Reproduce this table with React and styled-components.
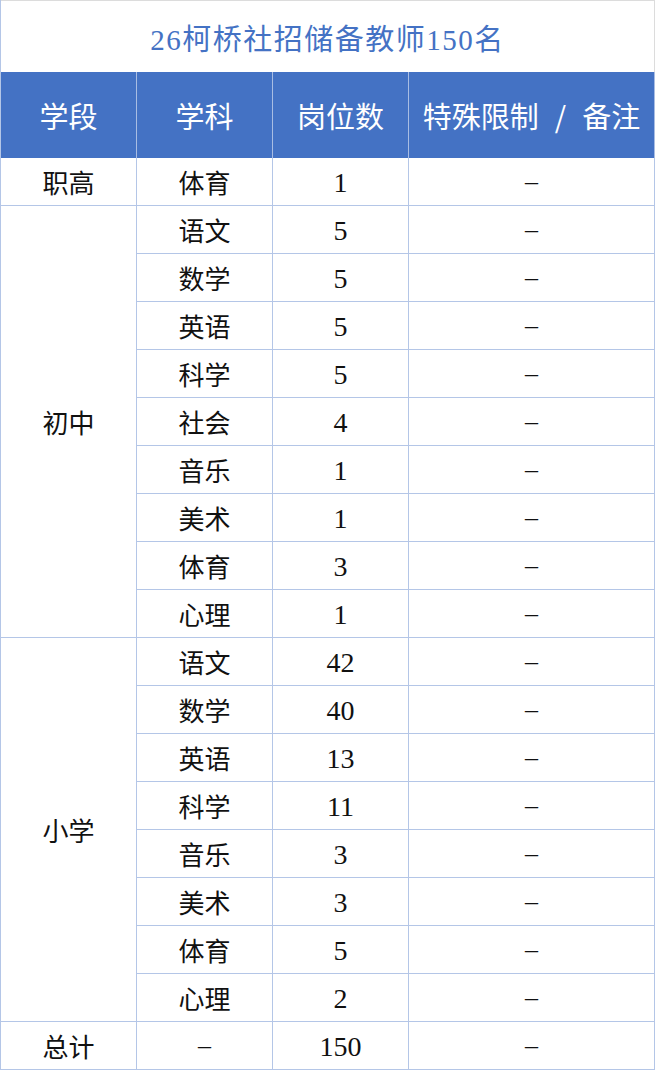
import React from 'react';
import styled, { createGlobalStyle } from 'styled-components';

const colors = {
  blue: '#4472c4',
  line: '#b4c6e7',
  text: '#111111',
};

const GlobalStyle = createGlobalStyle`
  body {
    margin: 0;
    background: #ffffff;
    font-family: "Liberation Serif", "Noto Sans CJK SC", serif;
  }
`;

const Sheet = styled.div`
  width: 655px;
  display: grid;
  grid-template-columns: 136px 136px 136px 1fr;
  grid-template-rows: 72px 86px;
  grid-auto-rows: 48px;
  border-left: 1px solid ${colors.line};
  box-sizing: border-box;
`;

const Title = styled.div`
  grid-column: 1 / -1;
  display: flex;
  align-items: center;
  justify-content: center;
  color: ${colors.blue};
  font-size: 29px;
  letter-spacing: 1.5px;
  border-top: 1px solid #dcdcdc;
  border-right: 1px solid #dcdcdc;
  box-sizing: border-box;
`;

const Head = styled.div`
  background: ${colors.blue};
  color: #ffffff;
  font-family: "Noto Sans CJK SC", sans-serif;
  font-size: 29px;
  display: flex;
  align-items: center;
  justify-content: center;
  gap: ${p => (p.wide ? 16 : 0)}px;
  border-right: 1px solid #a9bde3;
  box-sizing: border-box;
`;

const Cell = styled.div`
  grid-row: ${p => (p.span ? `span ${p.span}` : 'auto')};
  display: flex;
  align-items: center;
  justify-content: center;
  padding-top: ${p => (p.num ? 3 : 0)}px;
  color: ${colors.text};
  font-size: ${p => (p.num ? 28 : 26)}px;
  border-right: 1px solid ${colors.line};
  border-bottom: 1px solid ${colors.line};
  box-sizing: border-box;
`;

const groups = [
  { stage: '职高', rows: [['体育', '1']] },
  {
    stage: '初中',
    rows: [
      ['语文', '5'],
      ['数学', '5'],
      ['英语', '5'],
      ['科学', '5'],
      ['社会', '4'],
      ['音乐', '1'],
      ['美术', '1'],
      ['体育', '3'],
      ['心理', '1'],
    ],
  },
  {
    stage: '小学',
    rows: [
      ['语文', '42'],
      ['数学', '40'],
      ['英语', '13'],
      ['科学', '11'],
      ['音乐', '3'],
      ['美术', '3'],
      ['体育', '5'],
      ['心理', '2'],
    ],
  },
];

export default function App() {
  return (
    <>
      <GlobalStyle />
      <Sheet>
        <Title>26柯桥社招储备教师150名</Title>
        <Head>学段</Head>
        <Head>学科</Head>
        <Head>岗位数</Head>
        <Head wide>
          <span>特殊限制</span>
          <span>/</span>
          <span>备注</span>
        </Head>
        {groups.map(g =>
          g.rows.map(([subject, count], i) => (
            <React.Fragment key={g.stage + subject}>
              {i === 0 && <Cell span={g.rows.length}>{g.stage}</Cell>}
              <Cell>{subject}</Cell>
              <Cell num>{count}</Cell>
              <Cell>–</Cell>
            </React.Fragment>
          ))
        )}
        <Cell>总计</Cell>
        <Cell>–</Cell>
        <Cell num>150</Cell>
        <Cell>–</Cell>
      </Sheet>
    </>
  );
}
